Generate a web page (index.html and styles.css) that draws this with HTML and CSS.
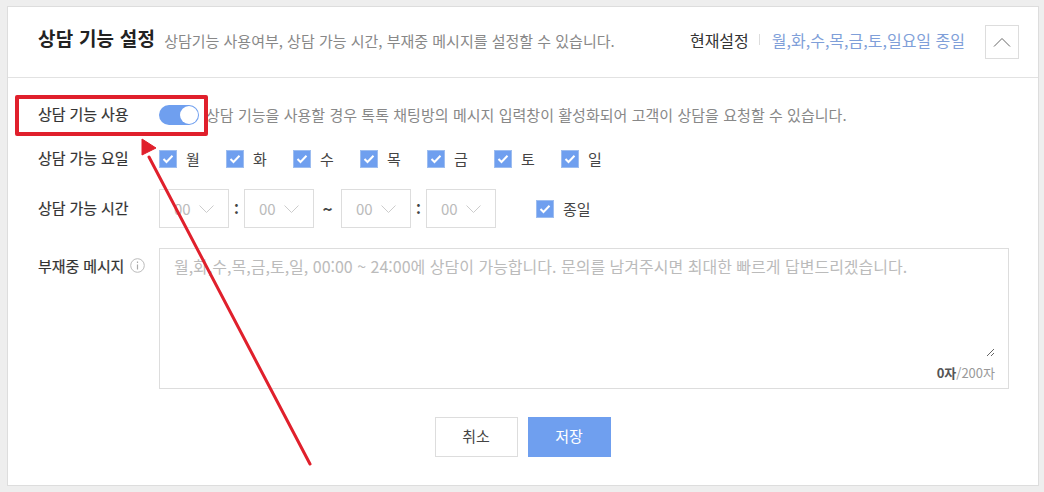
FILE: index.html
```html
<!DOCTYPE html>
<html lang="ko">
<head>
<meta charset="utf-8">
<title>상담 기능 설정</title>
<link rel="stylesheet" href="styles.css">
</head>
<body>
<section class="card">
  <header class="head">
    <h1 class="title">상담 기능 설정</h1>
    <p class="desc">상담기능 사용여부, 상담 가능 시간, 부재중 메시지를 설정할 수 있습니다.</p>
    <div class="current">
      <span class="current-label">현재설정</span>
      <span class="current-sep"></span>
      <span class="current-value">월,화,수,목,금,토,일요일 종일</span>
    </div>
    <button class="collapse" type="button" aria-label="접기">
      <svg width="18" height="10" viewBox="0 0 18 10"><path d="M1 9.5 9 1.5l8 8" fill="none" stroke="#666" stroke-width="1"/></svg>
    </button>
  </header>
  <div class="body">
    <div class="row row-use">
      <div class="label">상담 기능 사용</div>
      <span class="toggle"><span class="knob"></span></span>
      <span class="hint">상담 기능을 사용할 경우 톡톡 채팅방의 메시지 입력창이 활성화되어 고객이 상담을 요청할 수 있습니다.</span>
    </div>
    <div class="row row-days">
      <div class="label">상담 가능 요일</div>
      <div class="days">
        <label class="check"><span class="box"><svg width="12" height="10" viewBox="0 0 12 10"><path d="M1.5 5 4.5 8 10.5 1.8" fill="none" stroke="#fff" stroke-width="2"/></svg></span>월</label>
        <label class="check"><span class="box"><svg width="12" height="10" viewBox="0 0 12 10"><path d="M1.5 5 4.5 8 10.5 1.8" fill="none" stroke="#fff" stroke-width="2"/></svg></span>화</label>
        <label class="check"><span class="box"><svg width="12" height="10" viewBox="0 0 12 10"><path d="M1.5 5 4.5 8 10.5 1.8" fill="none" stroke="#fff" stroke-width="2"/></svg></span>수</label>
        <label class="check"><span class="box"><svg width="12" height="10" viewBox="0 0 12 10"><path d="M1.5 5 4.5 8 10.5 1.8" fill="none" stroke="#fff" stroke-width="2"/></svg></span>목</label>
        <label class="check"><span class="box"><svg width="12" height="10" viewBox="0 0 12 10"><path d="M1.5 5 4.5 8 10.5 1.8" fill="none" stroke="#fff" stroke-width="2"/></svg></span>금</label>
        <label class="check"><span class="box"><svg width="12" height="10" viewBox="0 0 12 10"><path d="M1.5 5 4.5 8 10.5 1.8" fill="none" stroke="#fff" stroke-width="2"/></svg></span>토</label>
        <label class="check"><span class="box"><svg width="12" height="10" viewBox="0 0 12 10"><path d="M1.5 5 4.5 8 10.5 1.8" fill="none" stroke="#fff" stroke-width="2"/></svg></span>일</label>
      </div>
    </div>
    <div class="row row-time">
      <div class="label">상담 가능 시간</div>
      <div class="select"><span>00</span><svg width="15" height="8" viewBox="0 0 15 8"><path d="M.5 .5 7.500 7.500 14.500 .5" fill="none" stroke="#ccc"/></svg></div>
      <span class="time-sep">:</span>
      <div class="select"><span>00</span><svg width="15" height="8" viewBox="0 0 15 8"><path d="M.5 .5 7.500 7.500 14.500 .5" fill="none" stroke="#ccc"/></svg></div>
      <span class="time-sep time-tilde">~</span>
      <div class="select"><span>00</span><svg width="15" height="8" viewBox="0 0 15 8"><path d="M.5 .5 7.500 7.500 14.500 .5" fill="none" stroke="#ccc"/></svg></div>
      <span class="time-sep">:</span>
      <div class="select"><span>00</span><svg width="15" height="8" viewBox="0 0 15 8"><path d="M.5 .5 7.500 7.500 14.500 .5" fill="none" stroke="#ccc"/></svg></div>
      <label class="check check-all"><span class="box"><svg width="12" height="10" viewBox="0 0 12 10"><path d="M1.5 5 4.5 8 10.5 1.800" fill="none" stroke="#fff" stroke-width="2"/></svg></span>종일</label>
    </div>
    <div class="row row-msg">
      <div class="label label-msg">부재중 메시지
        <svg class="info" width="15" height="15" viewBox="0 0 15 15"><circle cx="7.500" cy="7.500" r="6.800" fill="none" stroke="#bbb"/><path d="M7.500 6.500v5M7.500 3.500v1.500" stroke="#aaa" stroke-width="1.200"/></svg>
      </div>
      <div class="msg-box">
        <textarea class="msg" placeholder="월,화,수,목,금,토,일, 00:00 ~ 24:00에 상담이 가능합니다. 문의를 남겨주시면 최대한 빠르게 답변드리겠습니다."></textarea>
        <div class="count"><b>0자</b>/200자</div>
      </div>
    </div>
    <div class="actions">
      <button class="btn btn-cancel" type="button">취소</button>
      <button class="btn btn-save" type="button">저장</button>
    </div>
  </div>
</section>
<div class="callout"></div>
<svg class="arrow" width="1044" height="492" viewBox="0 0 1044 492"><path d="M310 464 149 157" fill="none" stroke="#e0202c" stroke-width="3" stroke-linecap="round"/><path d="M142 139 156 148 142 155Z" fill="#e0202c" stroke="#e0202c" stroke-width="1" stroke-linejoin="round"/></svg>
</body>
</html>
```
FILE: styles.css
```css
* { box-sizing: border-box; }
html, body { margin: 0; height: 100%; }
body {
  width: 1044px;
  height: 492px;
  padding: 6px 5px 5px 7px;
  background: #eee;
  font-family: "Noto Sans CJK KR", "Noto Sans", sans-serif;
  font-size: 15px;
  color: #333;
  overflow: hidden;
}
.card {
  height: 480px;
  background: #fff;
  border: 1px solid #ddd;
  display: flex;
  flex-direction: column;
}
.head {
  height: 71px;
  flex: none;
  border-bottom: 1px solid #e2e2e2;
  display: flex;
  align-items: center;
  padding: 0 19px 0 30px;
}
.title { margin: 0 0 8px; font-size: 19px; line-height: 24px; font-weight: 700; color: #222; letter-spacing: 0.2px; }
.desc { margin: 0 0 0 9px; font-size: 15px; line-height: 20px; color: #888; padding-bottom: 2px; white-space: nowrap; }
.current { margin-left: auto; display: flex; align-items: center; padding-bottom: 5px; }
.current-label { color: #333; font-size: 16px; }
.current-sep { width: 1px; height: 11px; background: #ddd; margin: 0 12px 0 10px; }
.current-value { color: #7f9fd9; font-size: 16px; }
.collapse {
  width: 34px; height: 34px; margin-left: 20px; padding: 0;
  border: 1px solid #ddd; background: #fff;
  display: flex; align-items: center; justify-content: center;
}
.body { flex: 1; padding: 0 29px 0 30px; display: flex; flex-direction: column; }
.row { display: flex; align-items: center; }
.label { width: 121px; flex: none; font-size: 15px; color: #333; white-space: nowrap; padding-bottom: 3px; letter-spacing: -0.1px; -webkit-text-stroke: 0.2px #333; }
.row-use { height: 34px; margin-top: 20px; }
.toggle { width: 40px; height: 20px; border-radius: 10px; background: #6f9fef; position: relative; flex: none; display: flex; justify-content: flex-end; align-items: center; padding-right: 1px; }
.knob { width: 18px; height: 18px; border-radius: 50%; background: #fff; }
.hint { margin-left: 7px; color: #888; font-size: 15px; white-space: nowrap; letter-spacing: 0.04px; padding-bottom: 2px; }
.row-days { height: 34px; margin-top: 10px; }
.days { display: flex; gap: 27px; }
.check { display: flex; align-items: center; font-size: 15px; color: #444; gap: 9px; width: 40px; line-height: 18px; }
.box { width: 18px; height: 18px; background: #6f9fef; border: 1px solid #9dbdf0; display: flex; align-items: center; justify-content: center; flex: none; }
.row-time { margin-top: 13px; height: 39px; }
.select {
  width: 70px; height: 39px; border: 1px solid #ddd; background: #fff; color: #bbb;
  display: flex; align-items: center; padding: 0 14px 0 14px; justify-content: space-between; font-size: 15px;
}
.time-sep { width: 15px; text-align: center; font-weight: 700; color: #444; }
.time-tilde { width: 27px; font-size: 17px; }
.check-all { width: auto; margin-left: 40px; white-space: nowrap; }
.row-msg { margin-top: 20px; align-items: flex-start; }
.label-msg { padding: 7px 0 0; display: flex; align-items: center; gap: 6px; }
.info { flex: none; }
.msg-box { width: 850px; height: 141px; border: 1px solid #ddd; display: flex; flex-direction: column; padding: 0 13px 0 14px; }
.msg {
  flex: 1; width: 100%; border: 0; outline: 0; padding: 6px 0 0; margin: 0; resize: vertical;
  font: 16px/22px "Noto Sans CJK KR", "Noto Sans", sans-serif; color: #333;
}
.msg::placeholder { color: #bbb; opacity: 1; }
.count { height: 31px; flex: none; text-align: right; font-size: 13px; line-height: 32px; color: #999; }
.count b { color: #555; }
.actions { display: flex; justify-content: center; gap: 10px; margin-top: 28px; padding-right: 2px; }
.btn { width: 83px; height: 40px; font: 15px "Noto Sans CJK KR", "Noto Sans", sans-serif; padding: 0 0 3px; }
.btn-cancel { background: #fff; border: 1px solid #ddd; color: #444; }
.btn-save { background: #6f9fef; border: 0; color: #fff; }
.callout { position: absolute; left: 15px; top: 95px; width: 193px; height: 41px; border: 4px solid #e0202c; border-radius: 2px; }
.arrow { position: absolute; left: 0; top: 0; pointer-events: none; }
```
